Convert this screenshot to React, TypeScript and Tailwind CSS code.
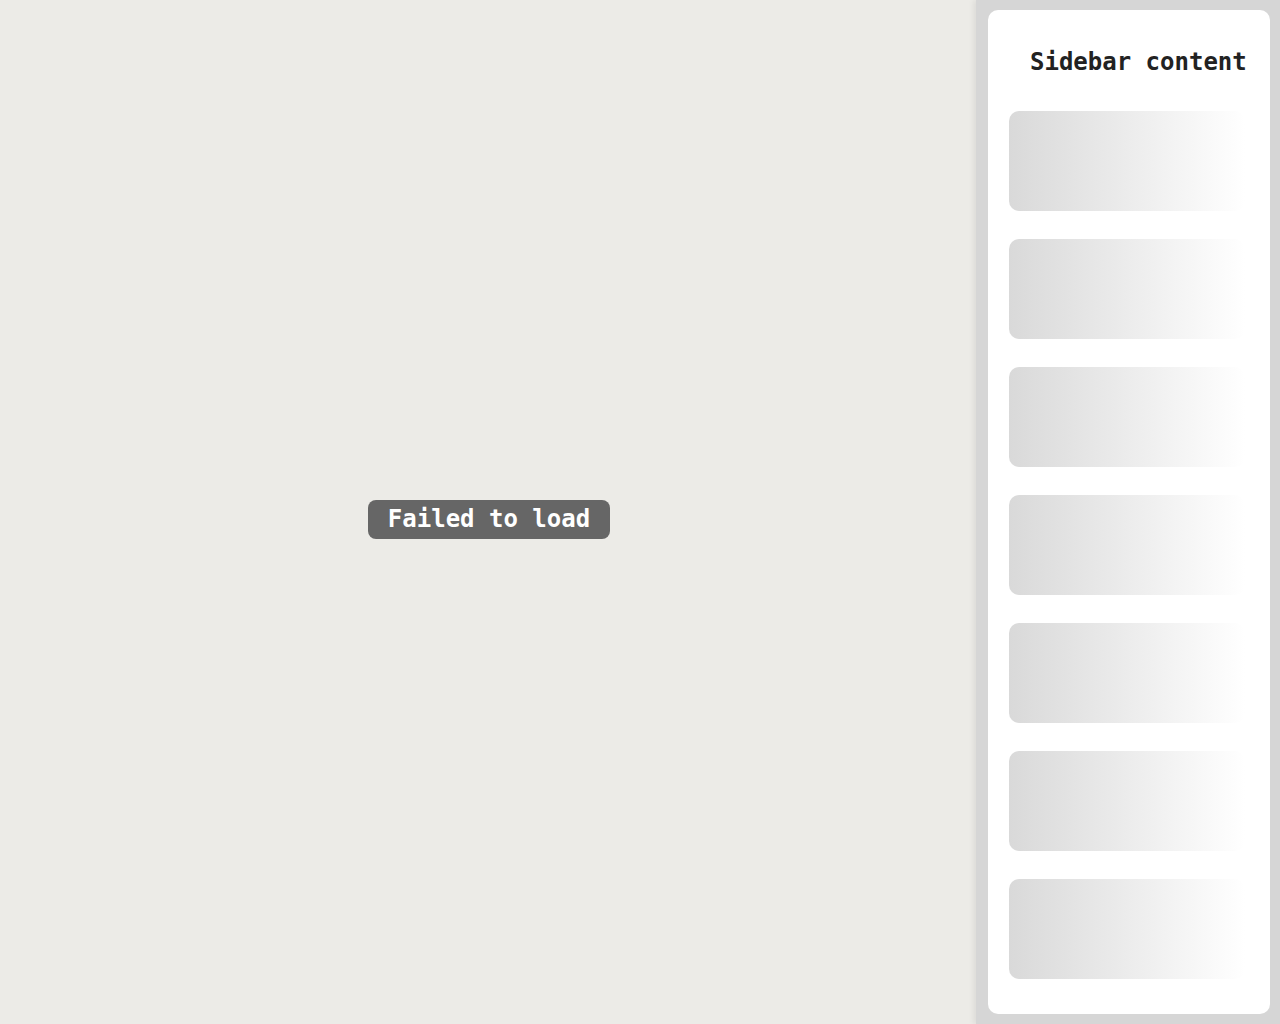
import React from "react";

const Skeleton = () => (
  <div className="h-[100px] w-[236px] shrink-0 rounded-[10px] bg-gradient-to-r from-[#d9d9d9] to-white" />
);

const App = () => {
  return (
    <div
      className="flex h-[1024px] w-full overflow-hidden bg-[#ecebe7]"
      style={{ fontFamily: '"DejaVu Sans Mono", "Liberation Mono", monospace' }}
    >
      {/* Main area */}
      <main className="flex flex-1 items-center justify-center pt-[15px] pl-[2px]">
        <div className="rounded-lg bg-[#666666] px-5 py-[3px] text-[24px] font-bold leading-[33px] text-white">
          Failed to load
        </div>
      </main>

      {/* Sidebar */}
      <aside className="w-[304px] shrink-0 bg-[#d6d6d6] py-[10px] pl-[12px] pr-[10px] shadow-[-2px_0_6px_rgba(0,0,0,0.08)]">
        <div className="flex h-full flex-col rounded-[10px] bg-white pl-[21px] pt-[27px]">
          <h2 className="pl-[21px] text-[24px] font-bold leading-[50px] text-[#222]">
            Sidebar content
          </h2>
          <div className="mt-[24px] flex flex-col gap-[28px]">
            {Array.from({ length: 7 }).map((_, i) => (
              <Skeleton key={i} />
            ))}
          </div>
        </div>
      </aside>
    </div>
  );
};

export default App;
